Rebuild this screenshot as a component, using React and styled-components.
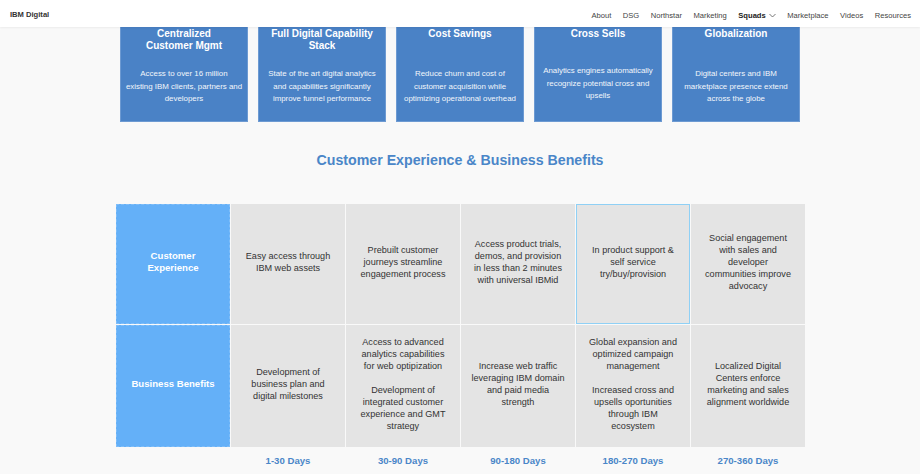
import React from "react";
import styled, { createGlobalStyle } from "styled-components";

const GlobalStyle = createGlobalStyle`
  html, body {
    margin: 0;
    padding: 0;
    background: #f9f9f9;
    font-family: "Liberation Sans", Arial, Helvetica, sans-serif;
    color: #333;
  }
`;

const Page = styled.div`
  width: 920px;
  height: 474px;
  overflow: hidden;
  background: #f9f9f9;
`;

const Header = styled.header`
  position: relative;
  z-index: 2;
  height: 27px;
  background: #fff;
  box-shadow: 0 1px 2px rgba(0, 0, 0, 0.06);
  display: flex;
  align-items: center;
  justify-content: space-between;
  padding: 0 9px 0 10px;
  box-sizing: border-box;
`;

const Brand = styled.div`
  font-size: 7.6px;
  font-weight: bold;
  color: #333;
  padding-top: 2px;
`;

const Nav = styled.nav`
  display: flex;
  align-items: center;
  gap: 11.5px;
  padding-top: 3px;
`;

const NavItem = styled.span`
  font-size: 7.6px;
  color: ${(p) => (p.active ? "#222" : "#444")};
  font-weight: ${(p) => (p.active ? "bold" : "normal")};
  display: flex;
  align-items: center;
  gap: 3px;
`;

const Cards = styled.section`
  display: flex;
  justify-content: center;
  gap: 10px;
`;

const Card = styled.div`
  width: 128px;
  height: 95px;
  box-sizing: border-box;
  background: #4a82c6;
  border: 1px solid #6d9ad2;
  border-top: none;
  padding: 1px 4px 0;
  color: #fff;
  text-align: center;
`;

const CardTitle = styled.div`
  height: 24px;
  font-size: 10px;
  line-height: 12px;
  font-weight: bold;
`;

const CardText = styled.div`
  margin-top: ${(p) => (p.lift ? "13px" : "16px")};
  font-size: 7.9px;
  line-height: 12.5px;
  white-space: nowrap;
  color: #f2f6fb;
`;

const Heading = styled.h2`
  margin: 28px 0 34px;
  text-align: center;
  font-size: 14.2px;
  line-height: 20px;
  font-weight: bold;
  color: #4a86c8;
`;

const Grid = styled.div`
  display: grid;
  grid-template-columns: repeat(6, 114px);
  column-gap: 1px;
  row-gap: 1px;
  width: 689px;
  margin-left: 116px;
`;

const Table = styled(Grid)`
  grid-template-rows: 120px 122px;
`;

const HeadCell = styled.div`
  background: #64b0f8;
  border: 1px dashed rgba(255, 255, 255, 0.18);
  box-sizing: border-box;
  display: flex;
  align-items: center;
  justify-content: center;
  padding-bottom: 4px;
  color: #fff;
  font-weight: bold;
  font-size: 9.6px;
  line-height: 12px;
  text-align: center;
`;

const Cell = styled.div`
  background: #e4e4e4;
  box-sizing: border-box;
  border: 1px solid ${(p) => (p.hover ? "#8fd0f5" : "transparent")};
  display: flex;
  align-items: center;
  justify-content: center;
  padding-bottom: 4px;
  font-size: 9.1px;
  line-height: 12px;
  color: #333;
  text-align: center;
  white-space: nowrap;
`;

const DaysRow = styled(Grid)`
  margin-top: 8px;
`;

const Days = styled.div`
  grid-column: ${(p) => p.col};
  text-align: center;
  font-size: 9.6px;
  line-height: 12px;
  font-weight: bold;
  color: #4a86c8;
`;

const Lines = ({ text }) =>
  text.split("\n").map((line, i, arr) => (
    <React.Fragment key={i}>
      {line === "" ? "\u00a0" : line}
      {i < arr.length - 1 && <br />}
    </React.Fragment>
  ));

const cards = [
  {
    title: "Centralized\nCustomer Mgmt",
    text: "Access to over 16 million\nexisting IBM clients, partners and\ndevelopers",
  },
  {
    title: "Full Digital Capability\nStack",
    text: "State of the art digital analytics\nand capabilities significantly\nimprove funnel performance",
  },
  {
    title: "Cost Savings",
    text: "Reduce churn and cost of\ncustomer acquisition while\noptimizing operational overhead",
  },
  {
    title: "Cross Sells",
    text: "Analytics engines automatically\nrecognize potential cross and\nupsells",
    lift: true,
  },
  {
    title: "Globalization",
    text: "Digital centers and IBM\nmarketplace presence extend\nacross the globe",
  },
];

const experience = [
  "Easy access through\nIBM web assets",
  "Prebuilt customer\njourneys streamline\nengagement process",
  "Access product trials,\ndemos, and provision\nin less than 2 minutes\nwith universal IBMid",
  "In product support &\nself service\ntry/buy/provision",
  "Social engagement\nwith sales and\ndeveloper\ncommunities improve\nadvocacy",
];

const benefits = [
  "Development of\nbusiness plan and\ndigital milestones",
  "Access to advanced\nanalytics capabilities\nfor web optipization\n\nDevelopment of\nintegrated customer\nexperience and GMT\nstrategy",
  "Increase web traffic\nleveraging IBM domain\nand paid media\nstrength",
  "Global expansion and\noptimized campaign\nmanagement\n\nIncreased cross and\nupsells oportunities\nthrough IBM\necosystem",
  "Localized Digital\nCenters enforce\nmarketing and sales\nalignment worldwide",
];

const days = ["1-30 Days", "30-90 Days", "90-180 Days", "180-270 Days", "270-360 Days"];

const navItems = ["About", "DSG", "Northstar", "Marketing", "Squads", "Marketplace", "Videos", "Resources"];

const Chevron = () => (
  <svg width="7" height="5" viewBox="0 0 7 5" fill="none">
    <path d="M0.5 1 L3.5 4 L6.5 1" stroke="#555" strokeWidth="0.8" />
  </svg>
);

export default function App() {
  return (
    <Page>
      <GlobalStyle />
      <Header>
        <Brand>IBM Digital</Brand>
        <Nav>
          {navItems.map((item) => (
            <NavItem key={item} active={item === "Squads"}>
              {item}
              {item === "Squads" && <Chevron />}
            </NavItem>
          ))}
        </Nav>
      </Header>

      <Cards>
        {cards.map((c) => (
          <Card key={c.title}>
            <CardTitle>
              <Lines text={c.title} />
            </CardTitle>
            <CardText lift={c.lift}>
              <Lines text={c.text} />
            </CardText>
          </Card>
        ))}
      </Cards>

      <Heading>Customer Experience &amp; Business Benefits</Heading>

      <Table>
        <HeadCell>
          Customer
          <br />
          Experience
        </HeadCell>
        {experience.map((t, i) => (
          <Cell key={i} hover={i === 3}>
            <div>
              <Lines text={t} />
            </div>
          </Cell>
        ))}
        <HeadCell>Business Benefits</HeadCell>
        {benefits.map((t, i) => (
          <Cell key={i}>
            <div>
              <Lines text={t} />
            </div>
          </Cell>
        ))}
      </Table>

      <DaysRow>
        {days.map((d, i) => (
          <Days key={d} col={i + 2}>
            {d}
          </Days>
        ))}
      </DaysRow>
    </Page>
  );
}
